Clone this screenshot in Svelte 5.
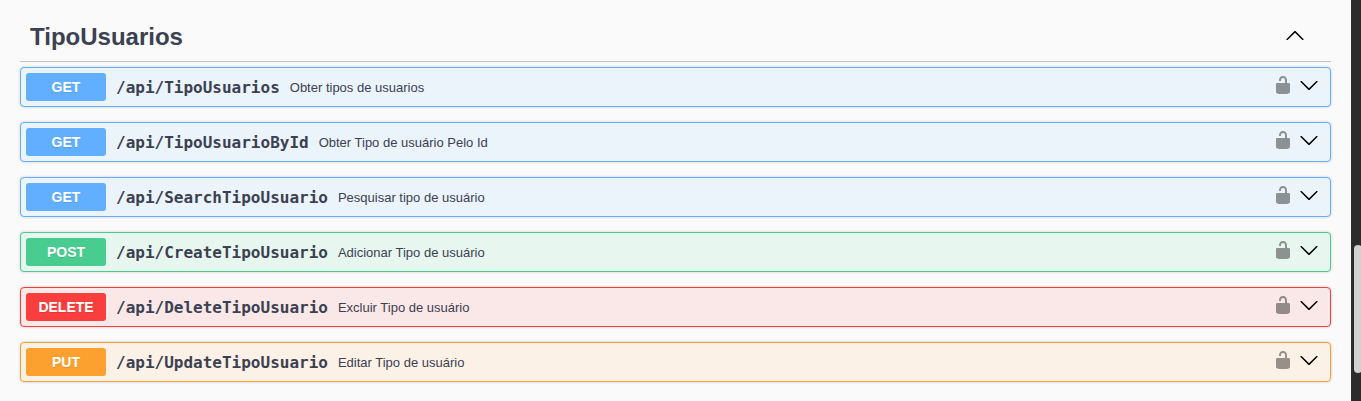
<script>
  const operations = [
    { method: 'GET', path: '/api/TipoUsuarios', summary: 'Obter tipos de usuarios' },
    { method: 'GET', path: '/api/TipoUsuarioById', summary: 'Obter Tipo de usuário Pelo Id' },
    { method: 'GET', path: '/api/SearchTipoUsuario', summary: 'Pesquisar tipo de usuário' },
    { method: 'POST', path: '/api/CreateTipoUsuario', summary: 'Adicionar Tipo de usuário' },
    { method: 'DELETE', path: '/api/DeleteTipoUsuario', summary: 'Excluir Tipo de usuário' },
    { method: 'PUT', path: '/api/UpdateTipoUsuario', summary: 'Editar Tipo de usuário' }
  ];
</script>

<div class="page">
  <main>
    <header>
      <h3>TipoUsuarios</h3>
      <svg class="arrow" width="20" height="20" viewBox="0 0 20 20">
        <path d="M17.418 14.908c.272.268.709.268.979 0s.271-.701 0-.969l-7.908-7.83c-.27-.268-.707-.268-.979 0l-7.908 7.83c-.27.268-.27.701 0 .969.271.268.709.268.979 0L10 7.767l7.418 7.141z" />
      </svg>
    </header>
    {#each operations as op}
      <div class="operation {op.method.toLowerCase()}">
        <span class="method">{op.method}</span>
        <span class="path">{op.path}</span>
        <span class="summary">{op.summary}</span>
        <svg class="lock" width="20" height="20" viewBox="0 0 20 20">
          <path d="M15.8 8H14V5.6C14 2.703 12.665 1 10 1 7.334 1 6 2.703 6 5.6V6h2v-.801C8 3.754 8.797 3 10 3c1.203 0 2 .754 2 2.199V8H4c-.553 0-1 .646-1 1.199V17c0 .549.428 1.139.951 1.307l1.197.387C5.672 18.861 6.55 19 7.1 19h5.8c.549 0 1.428-.139 1.951-.307l1.196-.387c.524-.167.953-.757.953-1.306V9.199C17 8.646 16.352 8 15.8 8z" />
        </svg>
        <svg class="arrow" width="20" height="20" viewBox="0 0 20 20">
          <path d="M17.418 6.109c.272-.268.709-.268.979 0s.271.701 0 .969l-7.908 7.83c-.27.268-.707.268-.979 0l-7.908-7.83c-.27-.268-.27-.701 0-.969.271-.268.709-.268.979 0L10 13.25l7.418-7.141z" />
        </svg>
      </div>
    {/each}
  </main>
  <aside><div class="thumb"></div></aside>
</div>

<style>
  .page {
    display: flex;
    height: 401px;
    overflow: hidden;
    background: #fafafa;
    color: #3b4151;
    font-family: "Liberation Sans", Arial, sans-serif;
  }
  main {
    flex: 1;
    padding: 12px 20px 0;
  }
  header {
    box-sizing: border-box;
    height: 50px;
    margin-bottom: 5px;
    padding: 0 26px 0 10px;
    display: flex;
    align-items: center;
    justify-content: space-between;
    border-bottom: 1px solid rgba(59, 65, 81, 0.3);
  }
  h3 {
    margin: 0;
    font-size: 24px;
    line-height: 28px;
  }
  svg {
    display: block;
    flex: none;
    fill: #000;
  }
  .operation {
    box-sizing: border-box;
    height: 40px;
    margin-bottom: 15px;
    padding: 5px 11px 5px 5px;
    display: flex;
    align-items: center;
    border: 1px solid var(--tone);
    border-radius: 4px;
    background: var(--tint);
    box-shadow: 0 0 3px rgba(0, 0, 0, 0.19);
  }
  .get { --tone: #61affe; --tint: #ebf3fb; }
  .post { --tone: #49cc90; --tint: #e8f6f0; }
  .delete { --tone: #f93e3e; --tint: #fae7e7; }
  .put { --tone: #fca130; --tint: #fbf1e6; }
  .method {
    width: 80px;
    border-radius: 3px;
    background: var(--tone);
    color: #fff;
    font-size: 14px;
    font-weight: 700;
    line-height: 16px;
    padding: 6px 0;
    text-align: center;
    text-shadow: 0 1px 0 rgba(0, 0, 0, 0.1);
  }
  .path {
    padding: 0 10px;
    font-family: "DejaVu Sans Mono", monospace;
    font-size: 16px;
    font-weight: 600;
  }
  .summary {
    flex: 1;
    font-size: 13px;
  }
  .lock {
    margin: -4px 6px 0 0;
    opacity: 0.4;
  }
  .arrow {
    margin-top: -4px;
  }
  aside {
    box-sizing: border-box;
    width: 10px;
    padding: 245px 0 0 3px;
    background: #2c2c2c;
  }
  .thumb {
    width: 8px;
    height: 128px;
    border-radius: 4px;
    background: #d1d1d1;
  }
</style>
